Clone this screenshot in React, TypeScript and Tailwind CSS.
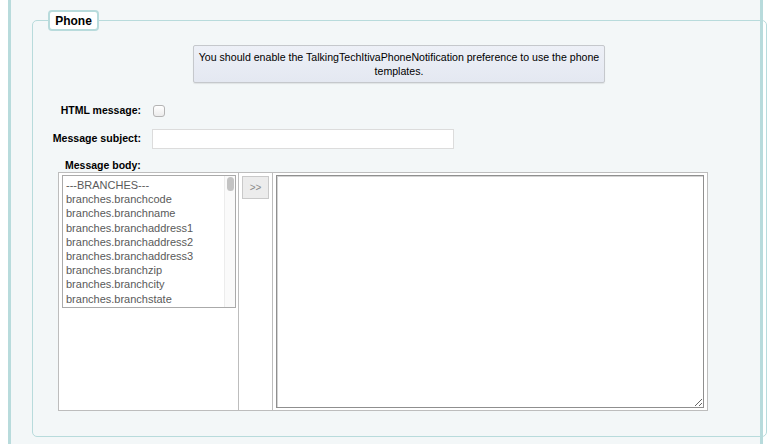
const fields = [
  '---BRANCHES---',
  'branches.branchcode',
  'branches.branchname',
  'branches.branchaddress1',
  'branches.branchaddress2',
  'branches.branchaddress3',
  'branches.branchzip',
  'branches.branchcity',
  'branches.branchstate',
];

export default function App() {
  return (
    <div className="bg-white h-[444px] overflow-hidden font-['Liberation_Sans',Arial,sans-serif] text-black">
      <div className="ml-[8px] w-[755px] h-[444px] border-x-[3px] border-[#b8dbdc] bg-[#f3f7f8] pt-[20px] pl-[21px]">
        {/* Phone fieldset */}
        <div className="relative w-[735px] h-[417px] border border-[#b8dbdc] rounded-[5px]">
          <div className="absolute left-[15px] top-[-11px] w-[51px] h-[21px] border-2 border-[#b8dbdc] rounded-[4px] bg-white flex items-center justify-center text-[12px] font-bold">
            Phone
          </div>

          <div className="ml-[160px] mt-[24px] w-[412px] h-[38px] border border-[#c5c8cc] rounded-[2px] bg-gradient-to-b from-[#edf0f7] to-[#e4e8f1] shadow-[0_1px_1px_rgba(0,0,0,0.08)] flex items-center justify-center text-center text-[10.6px] leading-[14px] px-[4px]">
            You should enable the TalkingTechItivaPhoneNotification preference to use the phone templates.
          </div>

          <div className="flex items-center mt-[21px] h-[14px]">
            <label className="w-[108px] text-right text-[10.5px] font-bold">HTML message:</label>
            <span className="ml-[12px] w-[12px] h-[12px] border border-[#b4b4b4] rounded-[3px] bg-gradient-to-b from-white to-[#ececec]" />
          </div>

          <div className="flex items-center mt-[11px] h-[20px]">
            <label className="w-[108px] text-right text-[10.6px] font-bold">Message subject:</label>
            <input className="ml-[11px] w-[302px] h-[20px] border border-[#dcdcdc] bg-white outline-none" />
          </div>

          <div className="ml-[32px] mt-[10px] h-[13px] leading-[13px] text-[10.5px] font-bold">Message body:</div>

          {/* body table */}
          <div className="ml-[25px] w-[650px] h-[239px] border border-[#bdbdbd] bg-white flex">
            <div className="w-[180px] border-r border-[#bdbdbd] pl-[3px] pt-[2px]">
              <div className="w-[174px] h-[133px] border border-[#aaaaaa] bg-white flex">
                <div className="flex-1 pl-[3px] pt-[2px] overflow-hidden">
                  {fields.map((f) => (
                    <div key={f} className="text-[11px] leading-[14.2px] text-[#5a5a5a] whitespace-nowrap">
                      {f}
                    </div>
                  ))}
                </div>
                <div className="w-[11px] border-l border-[#ececec] bg-[#fafafa] pt-[1px] flex justify-center">
                  <div className="w-[7px] h-[14px] rounded-full bg-[#c3c3c3]" />
                </div>
              </div>
            </div>
            <div className="w-[34px] border-r border-[#bdbdbd] pl-[3px] pt-[3px]">
              <div className="w-[27px] h-[23px] bg-[#ececec] border border-[#c9c9c9] flex items-center justify-center text-[10px] text-[#8a8a8a]">
                &gt;&gt;
              </div>
            </div>
            <div className="flex-1 pl-[3px] pt-[2px]">
              <textarea className="block w-[428px] h-[233px] border border-[#8f8f8f] shadow-[inset_1px_1px_0_#d4d4d4] bg-white outline-none resize" />
            </div>
          </div>
        </div>
      </div>
    </div>
  );
}
